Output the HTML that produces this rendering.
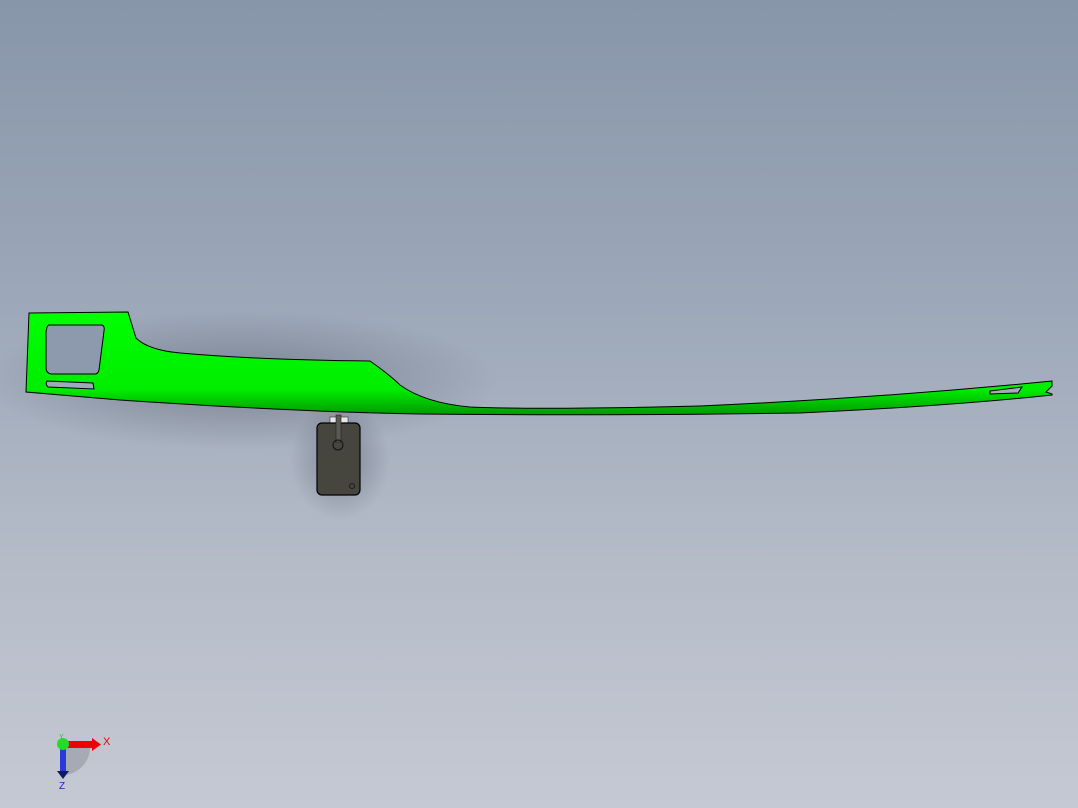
<!DOCTYPE html>
<html><head><style>
html,body{margin:0;padding:0}
body{width:1078px;height:808px;overflow:hidden;background:linear-gradient(180deg,#8896aa 0%,#9ea9ba 40%,#b5bcc8 70%,#c5c9d3 100%);font-family:"Liberation Sans",sans-serif}
svg{position:absolute;left:0;top:0}
</style></head><body>
<svg width="1078" height="808" viewBox="0 0 1078 808">
<defs>
<radialGradient id="sh" cx="0.5" cy="0.5" r="0.5">
<stop offset="0" stop-color="#5a6070" stop-opacity="0.55"/>
<stop offset="1" stop-color="#5a6070" stop-opacity="0"/>
</radialGradient>
<linearGradient id="gr" x1="0" y1="0" x2="0" y2="1">
<stop offset="0" stop-color="#00ff00"/>
<stop offset="0.75" stop-color="#00ee00"/>
<stop offset="1" stop-color="#009900"/>
</linearGradient>
</defs>
<ellipse cx="240" cy="380" rx="260" ry="70" fill="url(#sh)"/>
<ellipse cx="340" cy="460" rx="50" ry="60" fill="url(#sh)"/>
<path d="M29,313 L128,312 L136,338 Q148,350 180,353 Q260,360 370,361 Q390,375 400,385 Q425,403 470,407 Q540,410 700,406 Q880,398 1052,381 L1052,386 L1046,392 L1052,394 L1052,395 Q950,406 800,413 Q600,416 420,414 Q300,412 120,400 L26,392 Z" fill="url(#gr)" stroke="#000" stroke-width="1"/>
<path d="M49,325 L102,325 Q105,326 104,331 L99,370 Q98,374 95,374 L51,374 Q46,373 46,368 L46,332 Q47,325 49,325 Z" fill="#8d99ac" stroke="#000" stroke-width="1"/>
<path d="M47,381 L93,383 L94,389 L48,387 Q45,384 47,381 Z" fill="#9ea9b9" stroke="#000" stroke-width="1"/>
<path d="M990,391 L1022,387 L1018,393 L990,394 Z" fill="#a2abbb" stroke="#000" stroke-width="1"/>
<rect x="330" y="417" width="18" height="7" fill="#e8e8e8" stroke="#333" stroke-width="0.6"/>
<rect x="317" y="423" width="43" height="72" rx="5" fill="#46463f" stroke="#000" stroke-width="1.2"/>
<rect x="336" y="415" width="5" height="27" fill="#5a5a52" stroke="#222" stroke-width="0.6"/>
<circle cx="338" cy="445" r="5" fill="none" stroke="#111" stroke-width="1"/>
<circle cx="352" cy="486" r="2.5" fill="none" stroke="#111" stroke-width="0.8"/>
<path d="M60,745 L60,775 A28,28 0 0 0 90,745 Z" fill="#8a8e96" opacity="0.5"/>
<rect x="62" y="741" width="30" height="7" fill="#e00"/>
<path d="M92,738 L101,744.5 L92,751 Z" fill="#e00"/>
<rect x="60" y="745" width="6" height="26" fill="#2a3ad8"/>
<path d="M57,771 L69,771 L63,779 Z" fill="#10186a"/>
<circle cx="63" cy="744" r="6" fill="#22dd22"/>
<text x="103" y="745" font-size="11" fill="#e00">X</text>
<text x="59" y="789" font-size="10" fill="#22c">Z</text>
<text x="59" y="739" font-size="7" fill="#2c2">Y</text>
</svg>
</body></html>
